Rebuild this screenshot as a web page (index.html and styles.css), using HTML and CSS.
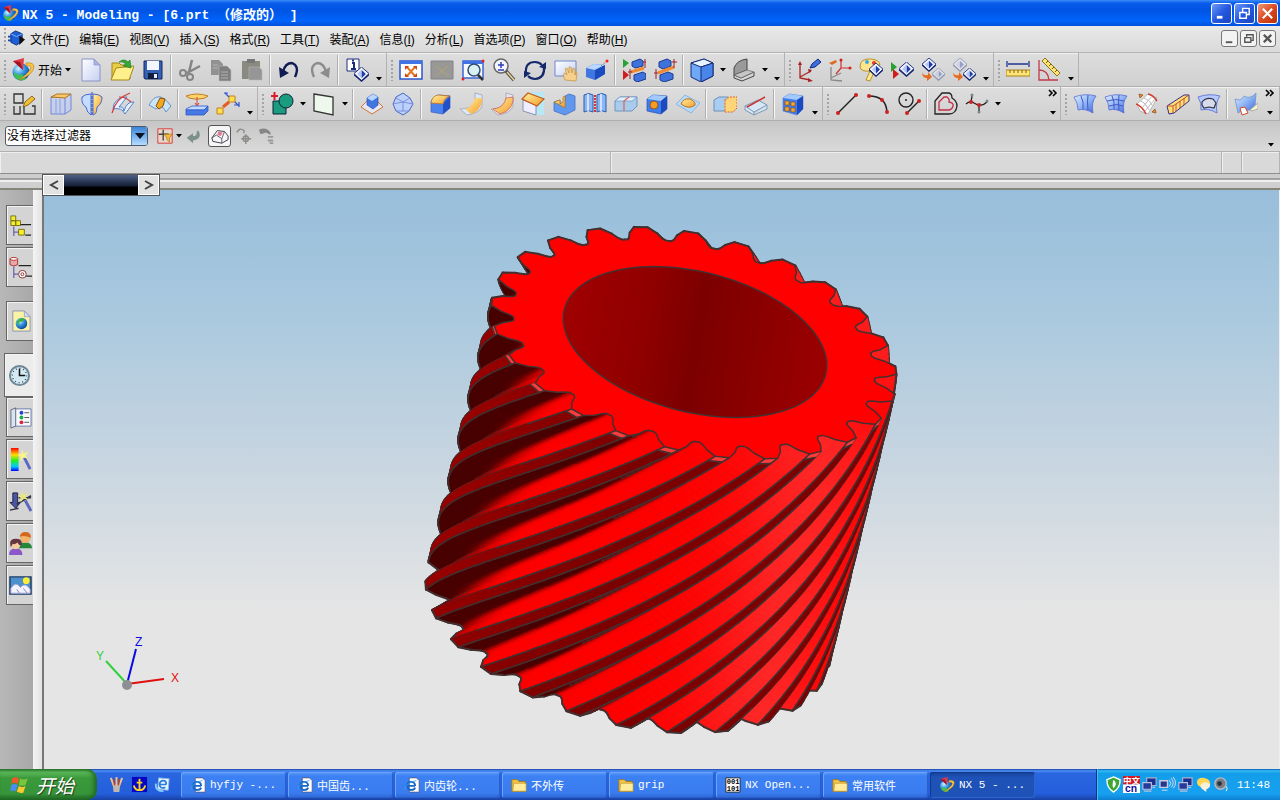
FILE: index.html
```html
<!DOCTYPE html>
<html lang="zh-CN">

<head>
    <meta charset="UTF-8">
    <meta name="viewport" content="width=device-width, initial-scale=1.0">
    <title>NX 5 - Modeling</title>
    <link rel="stylesheet" href="styles.css">
</head>

<body>
    <!-- shared gradients and the icons used more than once -->
    <svg class="defs" aria-hidden="true">
        <defs>
            <linearGradient id="blue" x1="0" y1="0" x2="1" y2="1">
                <stop offset="0" stop-color="#e4f0ff" />
                <stop offset="0.5" stop-color="#8db4f4" />
                <stop offset="1" stop-color="#3a62d8" />
            </linearGradient>
            <linearGradient id="gold" x1="0" y1="0" x2="1" y2="1">
                <stop offset="0" stop-color="#fff3a0" />
                <stop offset="1" stop-color="#f59b2c" />
            </linearGradient>
            <linearGradient id="pale" x1="0" y1="0" x2="1" y2="1">
                <stop offset="0" stop-color="#ffffff" />
                <stop offset="1" stop-color="#c5d0f2" />
            </linearGradient>
            <radialGradient id="ball" cx="0.35" cy="0.3" r="0.8">
                <stop offset="0" stop-color="#c8f4ff" />
                <stop offset="0.5" stop-color="#2c8ce0" />
                <stop offset="1" stop-color="#0a3a8c" />
            </radialGradient>
            <linearGradient id="rainbow" x1="0" y1="0" x2="0" y2="1">
                <stop offset="0" stop-color="#f00" />
                <stop offset="0.3" stop-color="#fd0" />
                <stop offset="0.55" stop-color="#2e2" />
                <stop offset="0.8" stop-color="#0cf" />
                <stop offset="1" stop-color="#00f" />
            </linearGradient>
        </defs>
        <symbol id="nx" viewBox="0 0 24 24">
            <circle cx="10" cy="14" r="8.500" fill="url(#ball)" />
            <path d="M3 14q3 4 8 2l4 5q-5 3-9 0-4-3-3-7" fill="#3fbf54" />
            <path d="M2 3l11-3-1 12z" fill="#e03a48" />
            <path d="M2 3l7 1 3 8z" fill="#a01224" />
            <path d="M15 5q8-1 8 4q-1 8-15 13q11-8 12-12q0-3-5-2z" fill="#f8c640" stroke="#b87912" stroke-width=".6" />
        </symbol>
        <symbol id="caret" viewBox="0 0 6 4">
            <path d="M0 0h6l-3 3.500z" fill="#000" />
        </symbol>
        <symbol id="more" viewBox="0 0 10 8">
            <path d="M1 1l3 3-3 3M5 1l3 3-3 3" fill="none" stroke="#000" stroke-width="1.600" />
        </symbol>
        <symbol id="folder" viewBox="0 0 18 16">
            <path d="M1 2h6l2 2h7v11H1z" fill="#f2c64a" stroke="#a87a14" />
            <path d="M3 6h14v9H2z" fill="#ffec9c" stroke="#b88c20" stroke-width=".7" />
        </symbol>
        <symbol id="iepage" viewBox="0 0 18 18">
            <path d="M6 1h8l3 3v13H6z" fill="#fff" stroke="#557" stroke-width=".8" />
            <path d="M12.500 10h-9a4.500 4.500 0 1 1 9 0M3.500 10q1 5 5 4.500q3 0 4-2.500" fill="none" stroke="#1767c8" stroke-width="2.200" />
            <path d="M1 14Q3 6 14 4" fill="none" stroke="#3ba0ee" />
        </symbol>
        <symbol id="diamond" viewBox="0 0 16 16">
            <path d="M8 0l8 7-8 8-8-8z" fill="#eef1ff" stroke="#15256e" />
            <path d="M8 3l4.500 4.500L8 12z" fill="#1d3ca8" />
            <path d="M8 3L3.500 7.500 8 12z" fill="#b5c4f2" />
            <path d="M0 8l8 7 8-7" fill="none" stroke="#15256e" stroke-width="1.500" />
        </symbol>
        <symbol id="monitors" viewBox="0 0 18 18">
            <path d="M6 2h10v8H6z" fill="#1d2f8e" stroke="#a9b2d0" stroke-width="1.200" />
            <path d="M2 7h9v7H2z" fill="#263a9c" stroke="#b9c0da" stroke-width="1.200" />
            <path d="M3 16h8M12 12h3" stroke="#b9c0da" stroke-width="1.500" />
        </symbol>
    </svg>

    <header class="titlebar">
        <svg class="title-icon"><use href="#nx" /></svg>
        <h1>NX 5 - Modeling - [6.prt （修改的） ]</h1>
        <div class="window-buttons">
            <button aria-label="最小化"><svg viewBox="0 0 16 16"><path d="M3 12h6" stroke="#fff" stroke-width="3" /></svg></button>
            <button aria-label="还原"><svg viewBox="0 0 16 16"><path d="M6 6V2.500h7V9h-3M3 7h7v6H3z" fill="none" stroke="#fff" stroke-width="1.500" /></svg></button>
            <button class="close" aria-label="关闭"><svg viewBox="0 0 16 16"><path d="M3 3l10 10M13 3L3 13" stroke="#fff" stroke-width="2.200" /></svg></button>
        </div>
    </header>

    <nav class="menubar">
        <span class="grip"></span>
        <svg class="menu-icon" viewBox="0 0 18 18"><path d="M3 4l5-3 7 3v8l-6 4-6-3z" fill="#1d5fd6" stroke="#10307c" /><path d="M3 4l6 3 6-3" fill="none" stroke="#7db4ff" /><path d="M0 7h4M0 11h4" stroke="#1748b0" stroke-width="2" /><path d="M12 6l6 4-6 6z" fill="#111" /></svg>
        <button>文件(<u>F</u>)</button>
        <button>编辑(<u>E</u>)</button>
        <button>视图(<u>V</u>)</button>
        <button>插入(<u>S</u>)</button>
        <button>格式(<u>R</u>)</button>
        <button>工具(<u>T</u>)</button>
        <button>装配(<u>A</u>)</button>
        <button>信息(<u>I</u>)</button>
        <button>分析(<u>L</u>)</button>
        <button>首选项(<u>P</u>)</button>
        <button>窗口(<u>O</u>)</button>
        <button>帮助(<u>H</u>)</button>
        <div class="doc-buttons">
            <button aria-label="最小化窗口"><svg viewBox="0 0 14 14"><path d="M3 11h7" stroke="#555" stroke-width="2" /></svg></button>
            <button aria-label="还原窗口"><svg viewBox="0 0 14 14"><path d="M5 5V3h7v6h-2M3 6h6.500v5H3z" fill="none" stroke="#555" stroke-width="1.500" /></svg></button>
            <button aria-label="关闭窗口"><svg viewBox="0 0 14 14"><path d="M3 3l8 8M11 3l-8 8" stroke="#555" stroke-width="2.500" /></svg></button>
        </div>
    </nav>

    <div class="toolbar">
        <div class="band">
            <span class="grip"></span>
            <button class="start-menu"><svg class="icon"><use href="#nx" /></svg>开始<svg class="caret"><use href="#caret" /></svg></button>
            <button class="tool" aria-label="新建"><svg viewBox="0 0 24 24"><path d="M3 1h12l6 6v16H3z" fill="url(#pale)" stroke="#8a93c6" /><path d="M15 1v6h6z" fill="#aab6e6" stroke="#8a93c6" stroke-width=".7" /></svg></button>
            <button class="tool" aria-label="打开"><svg viewBox="0 0 24 24"><path d="M2 5h7l2 2h9v14H2z" fill="#e8ce48" stroke="#a38716" /><path d="M1 22L6 10l18-2-5 14z" fill="#fff08c" stroke="#a38716" /><path d="M9 4q5-4 9 0l2-2 1 8-8-2 3-2q-3-3-7-2z" fill="#37a836" stroke="#14701a" stroke-width=".6" /></svg></button>
            <button class="tool" aria-label="保存"><svg viewBox="0 0 24 24"><path d="M3 3h18v18H4l-1-1z" fill="#3560b4" stroke="#14275e" /><path d="M6 3h12v9H6z" fill="#f3f6ff" /><path d="M7 15h10v6H7z" fill="#111d3c" /><path d="M13 16h3v4h-3z" fill="#e6edff" /></svg></button>
            <span class="sep"></span>
            <button class="tool" aria-label="剪切"><svg viewBox="0 0 24 24" fill="none" stroke="#858585"><path d="M14 2l-3 12M22 8L9 15" stroke-width="2.500" /><circle cx="5" cy="15" r="3" stroke-width="2" /><circle cx="12" cy="19" r="3" stroke-width="2" /></svg></button>
            <button class="tool" aria-label="复制"><svg viewBox="0 0 24 24"><path d="M2 2h8l4 4v11H2z" fill="#929292" /><path d="M10 8h8l4 4v11H10z" fill="#7f7f7f" stroke="#bbb" stroke-width=".6" /><path d="M4 7h5M4 10h5M12 14h7M12 17h7M12 20h7" stroke="#b3b3b3" /></svg></button>
            <button class="tool" aria-label="粘贴"><svg viewBox="0 0 24 24"><path d="M2 3h18v18H2z" fill="#8a8a80" /><path d="M7 1h8v4H7z" fill="#777" /><path d="M9 9h10l3 3v10H9z" fill="#969696" stroke="#b5b5b5" stroke-width=".6" /></svg></button>
            <span class="sep"></span>
            <button class="tool" aria-label="撤消"><svg viewBox="0 0 24 24"><path d="M6 14Q8 5 15 5Q23 8 18 19" fill="none" stroke="#101b54" stroke-width="2.400" /><path d="M2 9l1 11 9-5z" fill="#101b54" /></svg></button>
            <button class="tool" aria-label="重做"><svg viewBox="0 0 24 24"><path d="M18 14Q16 5 9 5Q1 8 6 19" fill="none" stroke="#8c8c8c" stroke-width="2.400" /><path d="M22 9l-1 11-9-5z" fill="#8c8c8c" /></svg></button>
            <span class="sep"></span>
            <button class="tool" aria-label="信息"><svg viewBox="0 0 24 24"><path d="M2 1h12v12H2z" fill="#fff" stroke="#1c2c7c" /><path d="M7 5h2v6M6 11h5" fill="none" stroke="#1c2c7c" stroke-width="2" /><path d="M7 2.500h2" stroke="#1c2c7c" stroke-width="2" /><use href="#diamond" x="9" y="9" width="15" height="15" /></svg></button>
            <button class="overflow" aria-label="选项"><svg class="caret"><use href="#caret" /></svg></button>
        </div>
        <div class="band">
            <span class="grip"></span>
            <button class="tool" aria-label="适合窗口"><svg viewBox="0 0 24 24"><path d="M1 3h22v18H1z" fill="#fff" stroke="#2b55cc" stroke-width="1.500" /><path d="M1 3h22v3H1z" fill="#3f73e6" /><path d="M8 9l8 9M16 9l-8 9" stroke="#e87722" stroke-width="2" /><path d="M6 8h4l-4 4zM18 8v4l-4-4zM6 19v-4l4 4zM18 19h-4l4-4z" fill="#d54415" /></svg></button>
            <button class="tool" aria-label="根据选择调整"><svg viewBox="0 0 24 24"><path d="M1 3h22v18H1z" fill="#989896" stroke="#84848c" /><path d="M6 8l12 10M18 8L6 18" stroke="#aaa081" stroke-width="1.600" /></svg></button>
            <button class="tool" aria-label="缩放窗口"><svg viewBox="0 0 24 24"><path d="M2 3h20v17H2z" fill="#f6f9ff" stroke="#3b66d8" stroke-width="1.500" /><path d="M2 3h20v3H2z" fill="#3f73e6" /><circle cx="13" cy="12" r="6" fill="#d9f0f0" stroke="#2f4c77" stroke-width="1.500" /><path d="M17 17l5 5" stroke="#333" stroke-width="2.500" /><circle cx="2" cy="21" r="1.500" fill="#d22" /><circle cx="22" cy="3" r="1.500" fill="#d22" /></svg></button>
            <button class="tool" aria-label="缩放"><svg viewBox="0 0 24 24"><circle cx="9" cy="8" r="7" fill="#f4f4ff" stroke="#666" stroke-width="1.500" /><path d="M6 7h6M9 4v6M6 12h6" stroke="#2a3cb8" stroke-width="1.500" /><path d="M14 13l8 9" stroke="#555" stroke-width="3.500" /><path d="M15 14l7 8" stroke="#e8d48a" stroke-width="1.500" /></svg></button>
            <button class="tool" aria-label="旋转"><svg viewBox="0 0 24 24"><path d="M3 15Q2 4 12 4q4 0 7 3M21 9q1 11-9 12q-4 0-7-3" fill="none" stroke="#15286c" stroke-width="2.200" /><path d="M16 9l7-5v7zM8 15l-7 5v-7z" fill="#15286c" /></svg></button>
            <button class="tool" aria-label="平移"><svg viewBox="0 0 24 24"><path d="M1 3h21v15H1z" fill="url(#pale)" stroke="#7085cc" /><path d="M11 22q-3-7 0-7l2 2-2-6 2-1 2 5v-6h2l1 6 1-5 2 1v6l1-3 1 1-1 8z" fill="#f5d08c" stroke="#c4903c" stroke-width=".7" /></svg></button>
            <button class="tool" aria-label="透视"><svg viewBox="0 0 24 24"><path d="M1 10l8-4 11 1v9l-10 6-9-3z" fill="#3f76e0" /><path d="M1 10l8-4 11 1-10 5z" fill="#b8d6ff" /><path d="M10 12l10-5v9l-10 6z" fill="#1c4bc0" /><path d="M16 8l6-5" stroke="#888" stroke-dasharray="2 1" /><circle cx="22" cy="3" r="1.500" fill="#e22" /></svg></button>
            <span class="sep"></span>
            <button class="tool" aria-label="显示截面"><svg viewBox="0 0 24 24"><path d="M1 1l6 4-6 5z" fill="#27a336" /><path d="M1 12l6 5-6 5z" fill="#cf1c1c" /><path d="M10 4l8-3 3 2v5l-8 2-3-2zM12 17l9-3 3 2v5l-9 3-3-2z" fill="#3f72dc" stroke="#1b3a91" /><path d="M9 14l13-4" stroke="#f08a30" stroke-width="3" /><path d="M8 11v10M6 14h4M23 1v9M21 4h4" stroke="#a11c2a" /></svg></button>
            <button class="tool" aria-label="编辑截面"><svg viewBox="0 0 24 24"><path d="M6 4l8-3 4 2v5l-8 3-4-2zM7 17l8-3 5 2v5l-9 3-4-2z" fill="#3f72dc" stroke="#1b3a91" /><path d="M5 15l16-6" stroke="#f08a30" stroke-width="3" /><path d="M3 11v10M1 15h4M21 1v9M19 4h5" stroke="#a11c2a" /></svg></button>
            <span class="sep"></span>
            <button class="tool" aria-label="着色"><svg viewBox="0 0 24 24"><path d="M1 5l13-4 9 4v13l-12 6-10-5z" fill="#6ea8f6" stroke="#162a7a" /><path d="M1 5l13-4 9 4-12 4z" fill="#e7f3ff" stroke="#162a7a" /><path d="M11 9l12-4v13l-12 6z" fill="#4a86ea" stroke="#162a7a" /></svg></button>
            <button class="drop" aria-label="着色选项"><svg class="caret"><use href="#caret" /></svg></button>
            <button class="tool" aria-label="面边"><svg viewBox="0 0 24 24"><path d="M2 17V10q3-8 13-9v11z" fill="#9a9a9a" stroke="#444" /><path d="M2 17l7 3 13-6v4l-12 5-8-3z" fill="#d6d6d6" stroke="#444" /><path d="M2 17l13-5 7 2-13 6z" fill="#c6c6c6" stroke="#666" stroke-width=".7" /></svg></button>
            <button class="drop" aria-label="面边选项"><svg class="caret"><use href="#caret" /></svg></button>
            <button class="overflow" aria-label="选项"><svg class="caret"><use href="#caret" /></svg></button>
        </div>
        <div class="band">
            <span class="grip"></span>
            <button class="tool" aria-label="WCS 方向"><svg viewBox="0 0 24 24"><path d="M3 6v14l10 2M3 19l11-6" fill="none" stroke="#a22" stroke-width="1.300" /><path d="M1 7l2-4 2 4zM11 11l4 1-3 3zM11 20l5 3-5 1z" fill="#a22" /><path d="M13 10l2-4 6-5 3 3-6 5z" fill="#3f6ee0" stroke="#112a7c" /></svg></button>
            <button class="tool" aria-label="WCS 动态"><svg viewBox="0 0 24 24"><path d="M13 2v8h10M13 10l-5 6" fill="none" stroke="#c33" stroke-width="1.200" /><path d="M3 9v13l11 1M3 20l10-5" fill="none" stroke="#888" stroke-width="1.300" /><path d="M1 5l7-3 1 2-5 3z" fill="#e06a1c" /><circle cx="13" cy="2" r="1.500" fill="#c22" /><circle cx="22" cy="10" r="1.500" fill="#c22" /></svg></button>
            <button class="tool" aria-label="编辑对象显示"><svg viewBox="0 0 24 24"><path d="M1 9Q1 0 12 1q9 1 9 6-5 0-5 5l-5 11-4-1 4-9q-9 1-10-4z" fill="#ffe58d" stroke="#b9932b" /><circle cx="8" cy="4" r="2" fill="#37a7e8" /><circle cx="15" cy="5" r="2" fill="#e33" /><use href="#diamond" x="10" y="5" width="14" height="14" /></svg></button>
            <button class="tool" aria-label="显示和隐藏"><svg viewBox="0 0 24 24"><path d="M1 4l6 5-6 5z" fill="#27a336" /><path d="M3 11l6 5-6 5z" fill="#cf1c1c" /><use href="#diamond" x="9" y="4" width="15" height="15" /></svg></button>
            <button class="tool" aria-label="隐藏"><svg viewBox="0 0 24 24"><use href="#diamond" x="1" y="0" width="14" height="14" /><use href="#diamond" x="11" y="10" width="13" height="13" opacity=".35" /><path d="M1 14q1 4 6 3v-3l4 5-5 4v-3q-5 0-5-6" fill="#e66b1f" /></svg></button>
            <button class="tool" aria-label="显示"><svg viewBox="0 0 24 24"><use href="#diamond" x="1" y="0" width="14" height="14" opacity=".35" /><use href="#diamond" x="11" y="10" width="13" height="13" /><path d="M1 14q1 4 6 3v-3l4 5-5 4v-3q-5 0-5-6" fill="#e66b1f" /></svg></button>
            <button class="overflow" aria-label="选项"><svg class="caret"><use href="#caret" /></svg></button>
        </div>
        <div class="band">
            <span class="grip"></span>
            <button class="tool" aria-label="测量距离"><svg viewBox="0 0 24 24"><path d="M1 3v6M23 3v6M2 6h20" stroke="#22358c" stroke-width="1.300" /><path d="M0 12h24v6H0z" fill="#ffe575" stroke="#aa8219" /><path d="M4 12v3M8 12v3M12 12v3M16 12v3M20 12v3" stroke="#7a5b0b" /></svg></button>
            <button class="tool" aria-label="测量角度"><svg viewBox="0 0 24 24"><path d="M2 2v20h19M2 12q9 0 10 10" fill="none" stroke="#c23a4a" stroke-width="1.300" /><path d="M8 0l15 15-3 3L5 3z" fill="#ffe575" stroke="#8f711b" /><path d="M9 5l2-2M12 8l2-2M15 11l2-2M18 14l2-2" stroke="#7a5b0b" /></svg></button>
            <button class="overflow" aria-label="选项"><svg class="caret"><use href="#caret" /></svg></button>
        </div>
    </div>

    <div class="toolbar">
        <div class="band">
            <span class="grip"></span>
            <button class="tool" aria-label="草图"><svg viewBox="0 0 24 24" fill="none" stroke="#333" stroke-width="1.300"><path d="M2 2h9v9H2zM2 14v8h6v-8M12 14v8h11v-8h-3" /><path d="M11 15l2-5 7-6 3 3-7 6z" fill="#f4c02a" stroke="#735010" stroke-width=".8" /></svg></button>
            <span class="sep"></span>
            <button class="tool" aria-label="拉伸"><svg viewBox="0 0 24 24"><path d="M2 5h14v17H2zM16 5l6-3v16l-6 4" fill="#bccbf8" fill-opacity=".6" stroke="#7187dc" /><path d="M2 5l6-3h14l-6 4z" fill="#f8c96a" stroke="#b2741b" /><path d="M7 7v14M11 7v14" stroke="#8b9de6" /></svg></button>
            <button class="tool" aria-label="回转"><svg viewBox="0 0 24 24"><path d="M11 2v21q-4-2-5-8-5-3-4-10 3-3 9-3z" fill="#c5dcff" stroke="#4a68cc" /><path d="M13 2v21q4-1 4-8 5-3 5-10-3-3-9-3z" fill="url(#gold)" stroke="#4a68cc" /><path d="M12 0v24" stroke="#2748b8" stroke-dasharray="3 1" /></svg></button>
            <button class="tool" aria-label="扫掠"><svg viewBox="0 0 24 24"><path d="M3 12Q8 4 16 5L8 15q4-1 5 4Q16 9 23 10L14 22q-3-7-12-5z" fill="#e6f1ff" stroke="#356cc4" stroke-width=".8" /><path d="M1 21Q5 6 19 1M8 5q7 0 12 5" fill="none" stroke="#d23a3a" stroke-width="1.200" /></svg></button>
            <span class="sep"></span>
            <button class="tool" aria-label="变化的扫掠"><svg viewBox="0 0 24 24"><path d="M1 13Q10-4 23 14l-5 6q-4-9-10-3z" fill="#c9e5fa" stroke="#6c93c4" /><path d="M8 14l4-8 5 1-2 7-4 3z" fill="#f3a81e" stroke="#885010" /></svg></button>
            <span class="sep"></span>
            <button class="tool" aria-label="基准"><svg viewBox="0 0 24 24"><path d="M1 4q11-4 22 0-3 3-9 3h-4Q4 7 1 4z" fill="#fbd26c" stroke="#c47c1e" /><path d="M12 5v8M10 11l2 3 2-3" stroke="#c43" fill="none" /><path d="M1 17l6-3h16l-4 4H1z" fill="#bfdcff" stroke="#2f57c6" stroke-width=".8" /><path d="M1 18h18l4-4v5l-4 4H1z" fill="#477ae4" stroke="#2f57c6" stroke-width=".8" /></svg></button>
            <button class="tool" aria-label="阵列"><svg viewBox="0 0 24 24"><path d="M13 4h6v6h-6zM1 16h6v6H1z" fill="#ffe04a" stroke="#c2811b" /><path d="M7 15l6-5" stroke="#e85c24" stroke-width="3" /><path d="M8 1h4M9 1l4 4M19 10l4 4M23 10v5M18 13h5" stroke="#3155d2" stroke-width="1.200" fill="none" /></svg></button>
            <button class="overflow" aria-label="选项"><svg class="caret"><use href="#caret" /></svg></button>
        </div>
        <div class="band">
            <span class="grip"></span>
            <button class="tool" aria-label="布尔"><svg viewBox="0 0 24 24"><path d="M3 9h13v13H3z" fill="#1a9c81" stroke="#123" /><circle cx="16" cy="9" r="7" fill="#1a9c81" stroke="#123" /><path d="M1 4h7M4.500 0v8" stroke="#d8202d" stroke-width="2" /></svg></button>
            <button class="drop" aria-label="布尔选项"><svg class="caret"><use href="#caret" /></svg></button>
            <button class="tool" aria-label="基准平面"><svg viewBox="0 0 24 24"><path d="M2 2l19 3v18L2 19z" fill="#eef8ec" stroke="#333" stroke-width="1.300" /></svg></button>
            <button class="drop" aria-label="基准选项"><svg class="caret"><use href="#caret" /></svg></button>
            <span class="sep"></span>
            <button class="tool" aria-label="凸台"><svg viewBox="0 0 24 24"><path d="M1 15L12 4l11 11-11 7z" fill="#e5e7f2" stroke="#d4732c" /><path d="M7 6l6-4 5 3v8l-5 4-6-4z" fill="#3f76e0" stroke="#3150b4" stroke-width=".7" /><path d="M7 6l6-4 5 3-6 4z" fill="#b8d6ff" /></svg></button>
            <button class="tool" aria-label="块"><svg viewBox="0 0 24 24"><path d="M12 1l7 5 3 6-4 7-6 4-7-4-3-7 3-7z" fill="#bcd0fa" stroke="#4a66c8" /><path d="M5 6l7 4 7-4M12 10v9M5 19l7 0 6 0M2 12l10-2 10 2" fill="none" stroke="#7890dc" /></svg></button>
            <span class="sep"></span>
            <button class="tool" aria-label="边倒圆"><svg viewBox="0 0 24 24"><path d="M3 10q2-6 8-7l11 1v12l-7 6-12-2z" fill="#4a82ee" stroke="#3a5cc0" stroke-width=".7" /><path d="M15 12l7-8v12l-7 6z" fill="#2350c8" /><path d="M3 11q1-7 7-8l12 1q-6 2-7 8z" fill="url(#gold)" stroke="#bf6c14" stroke-width=".7" /></svg></button>
            <button class="tool" aria-label="面倒圆"><svg viewBox="0 0 24 24"><path d="M16 1v9q-4 7-15 7l7 6q13-2 15-9V3z" fill="#dbe9ff" stroke="#99a" stroke-width=".7" /><path d="M16 6q-3 9-10 11l6 5q9-3 11-12V6z" fill="url(#gold)" /></svg></button>
            <button class="tool" aria-label="软倒圆"><svg viewBox="0 0 24 24"><path d="M16 1v9q-4 7-15 7l7 6q13-2 15-9V3z" fill="#e9e5ec" stroke="#99a" stroke-width=".7" /><path d="M16 6q-2 10-13 11l7 5q11-3 13-13V5z" fill="url(#gold)" stroke="#c55" stroke-width=".7" /></svg></button>
            <button class="tool" aria-label="倒斜角"><svg viewBox="0 0 24 24"><path d="M10 0h13v23H10z" fill="#b8e8f5" /><path d="M2 8l13 5v10L2 19z" fill="#eef" stroke="#8890b0" /><path d="M1 7L7 1l16 6-7 7z" fill="url(#gold)" stroke="#c45b18" stroke-width="1.200" /></svg></button>
            <button class="tool" aria-label="拔模"><svg viewBox="0 0 24 24"><path d="M2 10l6-2v4l5-3V4l4-2 6 2v14l-10 5-11-4z" fill="#5f98ee" stroke="#4a6cc0" stroke-width=".8" /><path d="M2 10l6 3 5 3V4l-2 1v5l-3 2V8z" fill="url(#gold)" stroke="#ab7216" stroke-width=".7" /></svg></button>
            <button class="tool" aria-label="抽壳"><svg viewBox="0 0 24 24"><path d="M1 3q5-3 9 0v17q-5-3-9 0zM14 3q5-3 9 0v17q-5-3-9 0z" fill="#89b7f4" stroke="#2b5bb2" /><path d="M5 2v17M18 2v17" stroke="#eef" stroke-width="1.500" /><path d="M12 3v18" stroke="#d33" stroke-width="2" stroke-dasharray="2 1" /></svg></button>
            <button class="tool" aria-label="分割面"><svg viewBox="0 0 24 24"><path d="M1 9l5-4h17v9l-5 5H1z" fill="#a9ccec" stroke="#6d94c0" /><path d="M1 9l5-4h17l-5 4z" fill="#e0f0fc" stroke="#6d94c0" stroke-width=".7" /><path d="M10 19V9l5-4" fill="none" stroke="#d86a5c" stroke-width="1.300" /></svg></button>
            <button class="tool" aria-label="孔"><svg viewBox="0 0 24 24"><path d="M2 7l6-4 14 1v13l-6 5-14-3z" fill="#3f7cec" stroke="#2a50b0" stroke-width=".7" /><path d="M2 7l6-4 14 1-6 5z" fill="#a3caff" /><path d="M16 9l6-5v13l-6 5z" fill="#1c48c0" /><circle cx="9" cy="13" r="4" fill="#f49b22" stroke="#854109" stroke-width=".7" /></svg></button>
            <button class="tool" aria-label="凸起"><svg viewBox="0 0 24 24"><path d="M0 12L9 3l15 8-9 10z" fill="#b6daf8" stroke="#8bb4dc" /><path d="M5 12q2-6 9-5 6 3 5 6-6 5-14-1z" fill="url(#gold)" stroke="#bd711c" /></svg></button>
            <span class="sep"></span>
            <button class="tool" aria-label="修剪体"><svg viewBox="0 0 24 24"><path d="M1 8l5-3h9v14H1z" fill="#a8cdf0" stroke="#6a90b8" /><path d="M12 8l4-3h8v11l-4 4h-8z" fill="#ffd57a" stroke="#e06525" stroke-dasharray="2 1" /></svg></button>
            <button class="tool" aria-label="分割体"><svg viewBox="0 0 24 24"><path d="M1 14L14 8l9 5-13 7zM1 14v4l9 5v-3M10 23l13-6v-4" fill="#d6e6f5" stroke="#7a99b8" /><path d="M3 15L21 5" stroke="#c33" stroke-width="1.500" /></svg></button>
            <span class="sep"></span>
            <button class="tool" aria-label="实例特征"><svg viewBox="0 0 24 24"><path d="M2 6l6-4 14 2v13l-6 6-14-4z" fill="#3f7cec" stroke="#5184da" stroke-width=".7" /><path d="M2 6l6-4 14 2-6 4z" fill="#a3caff" /><path d="M16 8l6-4v13l-6 6z" fill="#1c48c0" /><path d="M4 9h4v4H4zM10 10h4v4h-4zM4 15h4v4H4zM10 16h4v4h-4z" fill="#f8a823" stroke="#8b4611" stroke-width=".6" /></svg></button>
            <button class="overflow" aria-label="选项"><svg class="caret"><use href="#caret" /></svg></button>
        </div>
        <div class="band wide">
            <span class="grip"></span>
            <button class="tool" aria-label="直线"><svg viewBox="0 0 24 24"><path d="M3 21L21 3" stroke="#222" stroke-width="1.500" /><circle cx="3" cy="21" r="2" fill="#c22" /><circle cx="21" cy="3" r="2" fill="#c22" /></svg></button>
            <button class="tool" aria-label="圆弧"><svg viewBox="0 0 24 24"><path d="M3 4q17 0 18 16" fill="none" stroke="#222" stroke-width="1.500" /><circle cx="3" cy="4" r="2" fill="#c22" /><circle cx="16" cy="8" r="2" fill="#c22" /><circle cx="21" cy="20" r="2" fill="#c22" /></svg></button>
            <button class="tool" aria-label="圆"><svg viewBox="0 0 24 24"><circle cx="9" cy="8" r="7" fill="none" stroke="#222" stroke-width="1.400" /><circle cx="9" cy="8" r="1" fill="#222" /><path d="M10 21L22 9" stroke="#222" stroke-width="1.400" /><circle cx="10" cy="21" r="2" fill="#c22" /><circle cx="22" cy="9" r="2" fill="#c22" /></svg></button>
            <span class="sep"></span>
            <button class="tool" aria-label="偏置曲线"><svg viewBox="0 0 24 24" fill="none"><path d="M1 22V9l7-8h6q4 0 4 5 5 3 5 8-1 8-8 8z" stroke="#222" stroke-width="1.300" /><path d="M5 18v-8l5-5h3q3 2 2 5 5 1 4 4-1 4-5 4z" stroke="#c22f47" stroke-width="1.300" /></svg></button>
            <button class="tool" aria-label="样条"><svg viewBox="0 0 24 24"><path d="M1 12q4-4 8-1q7 5 13-1M6 10l1-6M14 14v6" fill="none" stroke="#222" stroke-width="1.300" /><circle cx="6" cy="10" r="2" fill="#c22" /><circle cx="14" cy="13" r="2" fill="#c22" /><circle cx="7" cy="3" r="1.500" fill="#788" /><circle cx="14" cy="20" r="1.500" fill="#788" /><circle cx="22" cy="9" r="1.500" fill="#788" /></svg></button>
            <button class="drop" aria-label="样条选项"><svg class="caret"><use href="#caret" /></svg></button>
            <button class="overflow push" aria-label="更多"><svg class="more"><use href="#more" /></svg><svg class="caret"><use href="#caret" /></svg></button>
        </div>
        <div class="band">
            <span class="grip"></span>
            <button class="tool" aria-label="直纹面"><svg viewBox="0 0 24 24"><path d="M1 5q11-4 22-1q-5 6-3 17Q12 16 5 18Q5 11 1 5z" fill="url(#blue)" stroke="#5a6cd0" stroke-width=".8" /><path d="M8 4q3 6 2 13M15 3q-1 6 0 15" fill="none" stroke="#4257c6" /></svg></button>
            <button class="tool" aria-label="网格曲面"><svg viewBox="0 0 24 24"><path d="M1 5q11-4 22-1q-5 6-3 17Q12 16 5 18Q5 11 1 5z" fill="url(#blue)" stroke="#5a6cd0" stroke-width=".8" /><path d="M8 4q3 6 2 13M15 3q-1 6 0 15M3 9q9-3 17 0M5 14q8-3 14 0" fill="none" stroke="#4257c6" /></svg></button>
            <button class="tool" aria-label="扫掠面"><svg viewBox="0 0 24 24"><path d="M2 12L13 2l9 4-9 16-8-3z" fill="#fff" stroke="#aaa" stroke-width=".8" /><path d="M1 12q6 2 10 10M13 2q5 1 9 7" fill="none" stroke="#d43b2d" stroke-width="1.500" /><path d="M6 9q5 2 8 9M9 6q6 2 8 7M7 16L17 4M10 19L20 7" fill="none" stroke="#bbb" /><path d="M4 2l4 1-3 3zM20 17l1 4-4-1z" fill="#e58a25" stroke="#8c4b14" stroke-width=".7" /></svg></button>
            <button class="tool" aria-label="剖切曲面"><svg viewBox="0 0 24 24"><path d="M1 14L18 3h5v6L8 21l-5 1z" fill="#ffdf72" stroke="#3a2a8e" /><path d="M1 14h6v7M7 14L23 3M10 12v7M14 9v7M18 6v7" fill="none" stroke="#c2503f" /></svg></button>
            <button class="tool" aria-label="N 边曲面"><svg viewBox="0 0 24 24"><path d="M1 5q11-4 22-1q-5 6-3 17Q12 16 4 18Q5 11 1 5z" fill="#b5caff" stroke="#6a7cd4" /><path d="M5 10q4-5 11-3l3 4-2 5-5-1-5 1-2-3z" fill="#d6dcea" stroke="#334" stroke-width="1.200" /></svg></button>
            <span class="sep"></span>
            <button class="tool" aria-label="修剪片体"><svg viewBox="0 0 24 24"><path d="M1 7q6 3 9-3q6 4 12-3l-1 14q-7 5-12 3l-5 3z" fill="url(#blue)" stroke="#6d95cc" stroke-width=".8" /><path d="M6 16l5-1 3 6-6 2z" fill="#fff" stroke="#d34a2c" /><path d="M16 18l8-7v6l-6 2z" fill="#f5f4ca" stroke="#aaa" /></svg></button>
            <button class="overflow last" aria-label="更多"><svg class="more"><use href="#more" /></svg><svg class="caret"><use href="#caret" /></svg></button>
        </div>
    </div>

    <div class="selectbar">
        <label class="filter" aria-label="选择过滤器">
            <select>
                <option>没有选择过滤器</option>
            </select>
            <span class="filter-arrow"><svg viewBox="0 0 12 8"><path d="M1 1h10L6 7z" fill="#0b1220" /></svg></span>
        </label>
        <button class="pick" aria-label="点选择"><svg viewBox="0 0 20 20"><path d="M2 2h16v16H2z" fill="#e8d6cc" stroke="#d33" /><path d="M8 3v12M3 8h11" stroke="#444" stroke-width="1.500" /><path d="M9 8h9l-3 4v5l-3-3v-2z" fill="#f3bd31" stroke="#a96e12" stroke-width=".7" /></svg></button>
        <svg class="caret"><use href="#caret" /></svg>
        <button class="pick" aria-label="重置"><svg viewBox="0 0 20 20"><path d="M16 4q5 9-6 11v3l-7-6 7-5v3q5 0 4-5z" fill="#7d918c" /></svg></button>
        <button class="pick on" aria-label="选择面"><svg viewBox="0 0 20 20"><path d="M1 12l6-8 8 1 4 5v4l-7 4-10-2z" fill="#f7f7fa" stroke="#334" /><path d="M1 12l5-3 6 4v5M12 13l3-8" fill="none" stroke="#556" /><path d="M8 5l5 1-2 4-4-1z" fill="#e8788c" /></svg></button>
        <button class="pick" aria-label="捕捉"><svg viewBox="0 0 20 20" fill="none" stroke="#8b8b88" stroke-width="1.500"><path d="M2 6q3-6 8-2v3M12 8v11M7 13h11" /><circle cx="12" cy="13" r="3" /></svg></button>
        <button class="pick" aria-label="捕捉列表"><svg viewBox="0 0 20 20"><path d="M2 3q8-4 13 3v3l-5-3-6 2z" fill="#868686" /><path d="M12 10h6v2h-6zM12 14h6v2h-6zM14 17h4v2h-4z" fill="#999" /></svg></button>
        <button class="overflow last" aria-label="选项"><svg class="caret"><use href="#caret" /></svg></button>
    </div>

    <div class="cueline"><span class="cue"></span><span class="status"></span><span class="cell"></span><span class="cell"></span></div>

    <div class="rail">
        <div class="slider">
            <button aria-label="向左"><svg viewBox="0 0 12 12"><path d="M10 2L3 6l7 4" fill="none" stroke="#444" stroke-width="2" /></svg></button>
            <span></span>
            <button aria-label="向右"><svg viewBox="0 0 12 12"><path d="M2 2l7 4-7 4" fill="none" stroke="#444" stroke-width="2" /></svg></button>
        </div>
    </div>

    <main class="workspace">
        <aside class="resources">
            <button class="tab" aria-label="装配导航器"><svg viewBox="0 0 24 24"><path d="M2 2h5v5H2zM2 7h5v5H2zM7 7h5v5H7zM10 16h6v6h-6z" fill="#f6ef2c" stroke="#777211" /><path d="M12 11h11M17 22h6" stroke="#222" stroke-width="1.300" /><path d="M5 13v10M5 19h5" stroke="#6d62a8" stroke-width="1.300" /></svg></button>
            <button class="tab" aria-label="部件导航器"><svg viewBox="0 0 24 24"><path d="M1 3h8v6q-4 3-8 0z" fill="#e9a8a8" stroke="#a33" /><ellipse cx="5" cy="3" rx="4" ry="1.500" fill="#fff" stroke="#a33" /><circle cx="14" cy="19" r="4" fill="#fff" stroke="#833" /><circle cx="14" cy="19" r="1.500" fill="none" stroke="#833" /><path d="M10 10h13M18 21h6" stroke="#222" stroke-width="1.300" /><path d="M5 11v12M5 19h5" stroke="#6d62a8" stroke-width="1.300" /></svg></button>
            <button class="tab apart" aria-label="浏览器"><svg viewBox="0 0 24 24"><path d="M4 1h12l6 6v15H4z" fill="#fdf3a6" stroke="#8a93b6" /><path d="M16 1v6h6z" fill="#d0daf6" stroke="#8a93b6" stroke-width=".7" /><circle cx="13" cy="14" r="6" fill="url(#ball)" /><path d="M8 12q4-5 8-3 0 4-5 3l-1 5z" fill="#3cb043" /></svg></button>
            <button class="tab active" aria-label="历史"><svg viewBox="0 0 24 24"><circle cx="12" cy="12" r="10" fill="#d4eaf2" stroke="#6d8794" stroke-width="2" /><circle cx="12" cy="12" r="7.500" fill="none" stroke="#345" stroke-width="1.500" stroke-dasharray="1 2.900" /><path d="M12 5v7h6" fill="none" stroke="#111" stroke-width="1.600" /></svg></button>
            <button class="tab" aria-label="系统材料"><svg viewBox="0 0 24 24"><path d="M6 3h17v18H6z" fill="#f7f9fd" stroke="#6b7ba8" /><path d="M2 4l5-2v19l-5 2z" fill="#d4e6f2" stroke="#667" /><circle cx="13" cy="7" r="2" fill="#24c" /><circle cx="13" cy="12" r="2" fill="#2a4" /><circle cx="13" cy="17" r="2" fill="#d24" /><path d="M16 7h5M16 12h5M16 17h5" stroke="#555" /></svg></button>
            <button class="tab" aria-label="加工向导"><svg viewBox="0 0 24 24"><path d="M2 0h8v24H2z" fill="url(#rainbow)" /><path d="M16 10l6 12" stroke="#5a66c0" stroke-width="3" /><path d="M14 1l1 5 5-2-3 4 3 3-5-1-3 4v-5l-3-2 4-1z" fill="#faf683" /></svg></button>
            <button class="tab" aria-label="管线布置向导"><svg viewBox="0 0 24 24"><path d="M4 3h5v10h3l-5 6-6-6h3z" fill="#4a57a8" stroke="#223" /><path d="M10 8h13M8 15l15-9M1 21l9-2" stroke="#334" stroke-width="1.600" /><path d="M17 11l6 11" stroke="#5a66c0" stroke-width="3" /><path d="M14 0l1 5 5-2-3 4 3 3-5-1-3 4v-5l-3-2 4-1z" fill="#e7e680" /></svg></button>
            <button class="tab" aria-label="角色"><svg viewBox="0 0 24 24"><path d="M10 17q0-6 7-6t7 6z" fill="#25873c" /><circle cx="17" cy="6" r="5.500" fill="#efb36e" /><path d="M11 5q1-5 6-5 6 0 6 6-7-3-12-1" fill="#d5671d" /><path d="M0 24q0-7 7-7t7 7z" fill="#8c57c8" /><circle cx="7" cy="13" r="5" fill="#f4cda0" /><path d="M2 16q-3-9 5-9t6 7q-3 0-4-3-4 3-5 1z" fill="#643640" /></svg></button>
            <button class="tab" aria-label="系统可视化场景"><svg viewBox="0 0 24 24"><path d="M1 3h22v18H1z" fill="#4c90cc" stroke="#223b66" stroke-width="1.500" /><circle cx="18" cy="7" r="3.500" fill="#ffed31" /><path d="M2 15q5-8 10-1 5-6 10 2v4H2z" fill="#f3f2ff" stroke="#a9a9d0" /><path d="M8 16l3 4M15 15l4 5" stroke="#8585c0" /></svg></button>
        </aside>
        <div class="splitter"></div>
        <section class="view">
            <canvas id="gear" width="480" height="520"></canvas>
            <svg class="triad" viewBox="0 0 90 64">
                <path d="M32 52L11 29" stroke="#2fd23a" stroke-width="2" />
                <path d="M32 52L41 17" stroke="#0a0ae0" stroke-width="2" />
                <path d="M32 52L69 47" stroke="#e01010" stroke-width="2" />
                <circle cx="32" cy="53" r="5" fill="#8f8f93" />
                <text x="1" y="28" fill="#2fd23a">Y</text>
                <text x="40" y="14" fill="#0a0ae0">Z</text>
                <text x="76" y="50" fill="#e01010">X</text>
            </svg>
        </section>
    </main>

    <footer class="taskbar">
        <button class="start"><svg viewBox="0 0 20 20"><path d="M3 4q3-2 6 0L8 9Q5 7 2 9z" fill="#f0582a" /><path d="M10 4q3 2 7 0l-2 6q-3 1-6 0z" fill="#7cc63c" /><path d="M2 10q3-2 6 0l-2 6q-3-2-5 0z" fill="#4a8df2" /><path d="M9 11q3 2 6 0l-2 6q-3 1-6-1z" fill="#fbc82e" /></svg>开始</button>
        <div class="quick">
            <svg viewBox="0 0 18 18"><path d="M5 9h8l-1 8H6z" fill="#c0b8b0" /><path d="M6 10L3 2M9 10V1M12 10l3-8" stroke="#e9c694" stroke-width="2" /><path d="M7 10L6 3M11 10l1-7" stroke="#c4382a" stroke-width="1.500" /></svg>
            <svg viewBox="0 0 18 18"><path d="M1 1h16v16H1z" fill="#0505c8" /><path d="M9 3v13M3 10q1 5 6 5t6-5M6 7h6" fill="none" stroke="#f7d31e" stroke-width="2" /></svg>
            <svg viewBox="0 0 18 18"><path d="M5 2l11 1-1 12-11-1z" fill="#e9f5ff" stroke="#88bce8" /><path d="M13 9H6q0-4 4-4 3 0 3 4M6 9q0 5 6 3" fill="none" stroke="#2a7cdd" stroke-width="1.800" /><path d="M2 8q-1 8 8 8" fill="none" stroke="#86c8ff" stroke-width="2" /></svg>
        </div>
        <div class="tasks">
            <button><svg><use href="#iepage" /></svg>hyfjy -...</button>
            <button><svg><use href="#iepage" /></svg>中国齿...</button>
            <button><svg><use href="#iepage" /></svg>内齿轮...</button>
            <button><svg><use href="#folder" /></svg>不外传</button>
            <button><svg><use href="#folder" /></svg>grip</button>
            <button><svg viewBox="0 0 18 18"><path d="M1 1h16v16H1z" fill="#fff" stroke="#222" /><text class="bits" x="2" y="8">001</text><text class="bits" x="2" y="16">101</text></svg>NX Open...</button>
            <button><svg><use href="#folder" /></svg>常用软件</button>
            <button class="current"><svg><use href="#nx" /></svg>NX 5 - ...</button>
        </div>
        <div class="tray">
            <svg viewBox="0 0 18 18"><path d="M9 1l7 3q0 9-7 13Q2 13 2 4z" fill="#3fa535" stroke="#f4fff0" stroke-width="1.500" /><path d="M9 4q-2 6 0 9 5-5 0-9" fill="#fff" /></svg>
            <svg viewBox="0 0 18 18"><path d="M0 0h18v9H0z" fill="#d31a22" /><path d="M0 9h18v9H0z" fill="#fff" /><text class="ime-zh" x="0" y="8">中文</text><text class="ime-en" x="2" y="17">cn</text></svg>
            <svg><use href="#monitors" /></svg>
            <svg viewBox="0 0 18 18"><path d="M1 5h8v7H1z" fill="#25388e" stroke="#ccd" stroke-width="1.500" /><path d="M3 15h6M11 4q3 4 0 7M13 2q4 6 0 10M15 1q5 7 0 12" fill="none" stroke="#dde" /></svg>
            <svg><use href="#monitors" /></svg>
            <svg viewBox="0 0 18 18"><path d="M2 6q1-5 8-4 7 2 6 7-1 4-6 3-8 0-8-6" fill="#ffd653" /><path d="M6 9q5-5 10 0 0 4-4 5v3l-4-3q-3-2-2-5" fill="#f7f1dc" /></svg>
            <svg viewBox="0 0 18 18"><circle cx="8" cy="8" r="6" fill="#777e88" stroke="#b5bac2" stroke-width="1.500" /><circle cx="7" cy="8" r="2.500" fill="#2c3038" /><path d="M14 11q2 2 0 5" fill="none" stroke="#fff" /></svg>
            <time>11:48</time>
        </div>
    </footer>

    <script src="gear.js"></script>
</body>

</html>
```
FILE: styles.css
```css
* {
    box-sizing: border-box;
}

body {
    margin: 0;
    height: 100vh;
    display: flex;
    flex-direction: column;
    overflow: hidden;
    background-color: #d8d8d8;
    font-family: "Liberation Sans", "Noto Sans CJK SC", sans-serif;
    font-size: 12px;
    color: #000;
}

button {
    margin: 0;
    padding: 0;
    border: none;
    background: none;
    font: inherit;
    color: inherit;
}

svg {
    flex: none;
}

.defs {
    position: absolute;
    width: 0;
    height: 0;
}

/* title bar */
.titlebar {
    display: flex;
    align-items: center;
    flex: none;
    height: 26px;
    padding: 0 2px;
    background: linear-gradient(#3c8cf8 0, #0a5cec 12%, #0054e3 40%, #0064fc 80%, #0350d8 100%);
    color: #fff;
}

.title-icon {
    width: 17px;
    height: 17px;
}

.titlebar h1 {
    flex: 1;
    margin: 0 0 0 3px;
    font-family: "Liberation Mono", "Noto Sans CJK SC", monospace;
    font-size: 13px;
    font-weight: bold;
    white-space: pre;
}

.window-buttons {
    display: flex;
    gap: 2px;
}

.window-buttons button {
    width: 21px;
    height: 21px;
    padding: 2px;
    border: 1px solid #fff;
    border-radius: 3px;
    background: linear-gradient(135deg, #6e9cf8, #2458e0 50%, #1a46c0);
}

.window-buttons .close {
    background: linear-gradient(135deg, #f09878, #dc4a22 50%, #b83008);
}

.window-buttons svg {
    display: block;
    width: 15px;
    height: 15px;
}

/* menus */
.menubar {
    display: flex;
    align-items: center;
    flex: none;
    height: 27px;
    padding: 0 4px 2px 0;
    border-bottom: 1px solid #b4b4b4;
    background: linear-gradient(#e9e9e9, #dadada);
}

.menubar > button {
    padding: 0 5px;
    white-space: nowrap;
}

.menu-icon {
    width: 17px;
    height: 17px;
}

.doc-buttons {
    display: flex;
    gap: 2px;
    margin-left: auto;
}

.doc-buttons button {
    width: 17px;
    height: 17px;
    padding: 1px;
    border: 1px solid #777;
    border-radius: 3px;
    background-color: #f3f3f3;
}

.doc-buttons svg {
    display: block;
    width: 13px;
    height: 13px;
}

/* toolbars */
.toolbar {
    display: flex;
    flex: none;
    height: 34px;
    border-bottom: 1px solid #aeaeae;
    background: linear-gradient(#dedede, #d0d0d0);
}

.band {
    display: flex;
    align-items: center;
    border-right: 1px solid #b2b2b2;
    box-shadow: inset 0 1px #f2f2f2;
}

.band.wide {
    flex: 1;
}

.grip {
    flex: none;
    width: 8px;
    height: 22px;
    background: radial-gradient(circle, #a4a4a4 1px, transparent 1px) 2px 0 / 6px 4px repeat-y;
}

.tool {
    display: flex;
    flex: none;
    align-items: center;
    justify-content: center;
    width: 31px;
    height: 30px;
}

.tool svg,
.icon {
    width: 24px;
    height: 24px;
}

.start-menu {
    display: flex;
    align-items: center;
    gap: 3px;
    width: 67px;
    padding-left: 3px;
    white-space: nowrap;
}

.sep {
    flex: none;
    width: 6px;
    height: 30px;
    background: linear-gradient(90deg, transparent 2px, #b0b0b0 2px, #b0b0b0 3px, #f6f6f6 3px, #f6f6f6 4px, transparent 4px);
}

.caret {
    width: 6px;
    height: 4px;
}

.drop {
    display: flex;
    align-items: center;
    justify-content: center;
    width: 11px;
    height: 30px;
}

.overflow {
    display: flex;
    flex-direction: column;
    align-items: center;
    justify-content: flex-end;
    width: 14px;
    height: 30px;
    padding-bottom: 4px;
}

.overflow.push {
    justify-content: space-between;
    margin-left: auto;
}

.overflow.last {
    width: 18px;
}

.band .last {
    justify-content: space-between;
}

.more {
    width: 10px;
    height: 8px;
}

/* selection bar */
.selectbar {
    display: flex;
    align-items: center;
    flex: none;
    height: 31px;
    padding-left: 5px;
    border-bottom: 1px solid #b0b0b0;
    background: linear-gradient(#c6c6c6, #dadada);
}

.selectbar .last {
    margin-left: auto;
}

.filter {
    display: flex;
    width: 143px;
    height: 20px;
    margin-right: 6px;
    border: 1px solid #4c5a6c;
    border-radius: 3px;
    background-color: #fff;
    overflow: hidden;
}

.filter select {
    flex: 1;
    min-width: 0;
    padding: 0 1px;
    border: none;
    appearance: none;
    background: none;
    font: inherit;
    color: #000;
}

.filter-arrow {
    display: flex;
    align-items: center;
    justify-content: center;
    width: 16px;
    border-left: 1px solid #4f86c4;
    background: linear-gradient(#3b84d8, #b4ddff);
}

.filter-arrow svg {
    width: 12px;
    height: 8px;
}

.pick {
    display: flex;
    align-items: center;
    justify-content: center;
    width: 22px;
    height: 22px;
    border-radius: 3px;
}

.pick svg {
    width: 18px;
    height: 18px;
}

.pick.on {
    width: 23px;
    margin: 0 2px 0 4px;
    border: 1px solid #555;
    background-color: #f6f6f6;
}

.cueline {
    display: flex;
    flex: none;
    height: 22px;
    border-bottom: 1px solid #8e8e8e;
    background-color: #d9d9d9;
    box-shadow: inset 0 1px #eee;
}

.cueline span {
    border-right: 1px solid #b4b4b4;
    box-shadow: inset 1px 0 #efefef;
}

.cue,
.status {
    flex: 1;
}

.cueline .cell {
    width: 20px;
}

.cueline .cell:last-child {
    width: 38px;
}

.rail {
    position: relative;
    flex: none;
    height: 16px;
    border-bottom: 2px solid #85857c;
    background: linear-gradient(#cdcdcd 4px, #999 4px, #aaa 6px, #f0f0f0 6px, #f0f0f0 8px, #cfcfcf 8px);
}

.slider {
    position: absolute;
    z-index: 1;
    top: 0;
    left: 42px;
    display: flex;
    width: 118px;
    height: 22px;
    border: 1px solid #555;
    background: linear-gradient(#4e6088, #141e33 55%, #000 60%);
}

.slider span {
    flex: 1;
}

.slider button {
    display: flex;
    align-items: center;
    justify-content: center;
    width: 21px;
    border: 1px solid #fff;
    background-color: #e2e2e2;
}

.slider svg {
    width: 12px;
    height: 12px;
}

/* work area */
.workspace {
    display: flex;
    flex: 1;
    min-height: 0;
}

.resources {
    display: flex;
    flex-direction: column;
    align-items: flex-end;
    gap: 2px;
    width: 33px;
    padding-top: 15px;
    background: linear-gradient(90deg, #b8b8b8, #a8a8a8);
}

.tab {
    display: flex;
    flex: none;
    align-items: center;
    justify-content: center;
    width: 27px;
    height: 40px;
    border: 1px solid #666;
    border-right: none;
    background-color: #d4d4d4;
    box-shadow: inset 1px 1px #f3f3f3;
}

.tab svg {
    width: 23px;
    height: 23px;
}

.tab.apart {
    margin: 12px 0 10px;
}

.tab.active {
    width: 29px;
    height: 44px;
    margin-bottom: -2px;
    background-color: #ececec;
}

.splitter {
    width: 11px;
    border-right: 2px solid #777;
    background: linear-gradient(90deg, #f4f4f4, #e2e2e2);
}

.view {
    position: relative;
    display: flex;
    flex: 1;
    align-items: center;
    justify-content: center;
    min-width: 0;
    border-right: 1px solid #eee;
    background: linear-gradient(#98bedb 0, #a6c7de 18%, #c3d3e0 43%, #dadfe3 63%, #e5e5e5 73%);
}

.triad {
    position: absolute;
    left: 51px;
    bottom: 73px;
    width: 90px;
    height: 64px;
    font-size: 12px;
}

/* taskbar */
.taskbar {
    display: flex;
    align-items: stretch;
    flex: none;
    height: 31px;
    background: linear-gradient(#1941a5 0, #4a8ef5 6%, #2a66e0 14%, #245edb 80%, #1941a5 100%);
    color: #fff;
}

.start {
    display: flex;
    align-items: center;
    gap: 5px;
    width: 97px;
    padding-left: 9px;
    border-radius: 0 10px 10px 0;
    background: linear-gradient(#2f7a2f, #5bb85a 10%, #3a9a3a 30%, #37943a 80%, #1f6422);
    box-shadow: inset -3px 0 4px #1f6a24;
    font-size: 19px;
    font-style: italic;
    text-shadow: 1px 1px 1px #1c3c1c;
}

.start svg {
    width: 22px;
    height: 22px;
}

.quick {
    display: flex;
    align-items: center;
    gap: 6px;
    width: 84px;
    padding-left: 11px;
}

.quick svg {
    width: 17px;
    height: 17px;
}

.tasks {
    display: flex;
    flex: 1;
    gap: 2px;
    padding: 3px 0 2px;
}

.tasks button {
    display: flex;
    flex: 0 1 105px;
    align-items: center;
    gap: 4px;
    min-width: 0;
    padding-left: 9px;
    border-radius: 3px;
    background: linear-gradient(#5c9cf8, #3c81f3 15%, #3a7cf0 80%, #2d66d4);
    box-shadow: inset 1px 1px #6ba4fa, inset -1px -1px #2b5fc8;
    font-family: "Liberation Mono", "Noto Sans CJK SC", monospace;
    font-size: 11px;
    white-space: nowrap;
}

.tasks .current {
    background: linear-gradient(#163f96, #1e52b7 20%, #1e52b7);
    box-shadow: inset 1px 1px #123a88, inset -1px -1px #2d66cc;
}

.tasks svg {
    width: 16px;
    height: 16px;
}

.bits {
    font: bold 8px "Liberation Mono", monospace;
}

.tray {
    display: flex;
    align-items: center;
    gap: 1px;
    width: 184px;
    padding-left: 8px;
    border-left: 1px solid #0c2f80;
    background: linear-gradient(#0c59b9 0, #32bdf5 6%, #139ee9 14%, #18a0f0 80%, #0d7ed0 100%);
    box-shadow: inset 1px 0 #3ac3f8;
    font-family: "Liberation Mono", monospace;
    font-size: 11px;
}

.tray svg {
    width: 17px;
    height: 17px;
}

.tray time {
    margin-left: 6px;
}

.ime-zh {
    font: bold 9px "Noto Sans CJK SC", sans-serif;
    fill: #fff;
}

.ime-en {
    font: bold 11px "Liberation Sans", sans-serif;
    fill: #1010a0;
}
```
FILE: gear.js
```js
// Helical gear, drawn as an orthographic projection with the faces sorted by depth
const canvas = document.getElementById('gear');
const ctx = canvas.getContext('2d');

const TEETH = 25;
const PITCH = 360 / TEETH;
const PHASE = 3;
const TWIST = 95.7;
const HEIGHT = 332;
const SLICES = 70;
const OUTER = 206;
const BORE = 134;
const LINE = '#433030';

// one tooth: angle from the middle of the tip, radius
const profile = [
    [-7.2, 184], [-6.3, 184], [-5.4, 187], [-4.2, 196], [-2, OUTER],
    [2, OUTER], [4.2, 196], [5.4, 187], [6.3, 184]
];
const TIP = 4;

function project(angle, r, t) {
    const a = (angle - TWIST * t) * Math.PI / 180;
    const c = r * Math.cos(a);
    const s = r * Math.sin(a);
    return {
        x: 272 + 0.849 * c - 0.495 * s - 66 * t,
        y: 123 - 0.118 * c - 0.550 * s + 274 * t,
        depth: -0.515 * c - 0.667 * s - 0.524 * HEIGHT * t
    };
}

function ramp(v, from, to) {
    const k = Math.min(1, Math.max(0, (v - from) / (to - from)));
    return k * k * (3 - 2 * k);
}

function shade(segment, angle, t) {
    let a = angle - TWIST * t;
    while (a < -270) a += 360;
    while (a > 90) a -= 360;
    if (segment === TIP) {
        if (t < 0.018) return 'rgb(255, 60, 60)';
        return 'rgb(' + Math.round(124 + 30 * ramp(-a, 130, 210)) + ', 0, 0)';
    }
    // position across the groove, 0 under one tip and 1 at the next
    const across = segment > TIP ? (segment - 5) * 0.16 : 0.64 + segment * 0.12;
    const upper = ramp(a, -150, -108);
    const lower = ramp(a, -205, -165);
    const k = upper + (lower - upper) * ramp(across, 0.1, 0.75);
    const shine = Math.round(38 * Math.exp(-Math.pow((a + 80) / 22, 2)) + 28 * ramp(a, -50, -20));
    return 'rgb(' + Math.round(72 + 183 * k) + ',' + shine + ',' + shine + ')';
}

function trace(corners) {
    ctx.beginPath();
    corners.forEach(c => ctx.lineTo(c.x, c.y));
}

const points = [];
for (let i = 0; i < TEETH; i++) {
    profile.forEach(([a, r], segment) => points.push({ a: PHASE + i * PITCH + a, r, segment }));
}

const items = [];
const count = points.length;

ctx.lineJoin = 'round';
ctx.lineCap = 'round';

for (let j = 0; j < SLICES; j++) {
    const t0 = j === 0 ? 0 : j === 1 ? 0.018 : j / SLICES;
    const t1 = j === 0 ? 0.018 : (j + 1) / SLICES;
    const quads = points.map((p, i) => {
        const q = points[(i + 1) % count];
        const corners = [project(p.a, p.r, t0), project(q.a, q.r, t0), project(q.a, q.r, t1), project(p.a, p.r, t1)];
        const [k, l, , m] = corners;
        const front = (l.x - k.x) * (m.y - k.y) - (l.y - k.y) * (m.x - k.x) > 0;
        return { corners, front, p };
    });
    quads.forEach((quad, i) => {
        const { corners, front, p } = quad;

        // dark rim that stays visible only round the silhouette
        trace(corners);
        ctx.closePath();
        ctx.strokeStyle = LINE;
        ctx.lineWidth = 2.4;
        ctx.stroke();

        const before = quads[(i + count - 1) % count];
        const edge = p.segment === TIP || p.segment === TIP + 1;
        if ((edge && (front || before.front)) || front !== before.front) {
            const depth = (corners[0].depth + corners[3].depth) / 2 + 4;
            items.push({ line: [corners[0], corners[3]], depth });
        }
        if (front) {
            const depth = corners.reduce((sum, c) => sum + c.depth, 0) / 4;
            items.push({ corners, depth, color: shade(p.segment, p.a, (t0 + t1) / 2) });
            if (j === 0 && p.segment === TIP) {
                items.push({ line: [corners[2], corners[3]], depth: depth + 5 });
            }
            if (j === SLICES - 1) {
                items.push({ line: [corners[2], corners[3]], depth: depth + 4 });
            }
        }
    });
}

items.sort((a, b) => a.depth - b.depth);

items.forEach(item => {
    trace(item.line || item.corners);
    if (item.line) {
        ctx.strokeStyle = LINE;
        ctx.lineWidth = 1.6;
        ctx.stroke();
        return;
    }
    ctx.closePath();
    ctx.fillStyle = item.color;
    ctx.strokeStyle = item.color;
    ctx.lineWidth = 0.7;
    ctx.fill();
    ctx.stroke();
});

// end face
trace(points.map(p => project(p.a, p.r, 0)));
ctx.closePath();
ctx.fillStyle = '#ff0000';
ctx.strokeStyle = LINE;
ctx.lineWidth = 1.5;
ctx.fill();
ctx.stroke();

// bore
const rim = [];
for (let a = 0; a < 360; a += 3) {
    const c = project(a, BORE, 0);
    rim.push({ x: c.x + 1, y: c.y - 1 });
}
trace(rim);
ctx.closePath();
const inside = ctx.createLinearGradient(142, 100, 405, 145);
inside.addColorStop(0, '#a00000');
inside.addColorStop(0.3, '#900000');
inside.addColorStop(0.5, '#7c0000');
inside.addColorStop(1, '#9c0000');
ctx.fillStyle = inside;
ctx.fill();
ctx.stroke();
```
